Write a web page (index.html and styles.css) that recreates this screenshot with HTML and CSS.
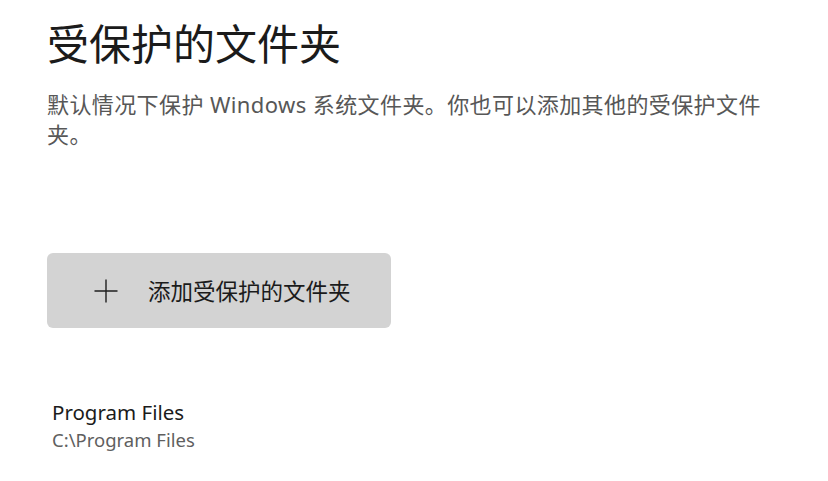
FILE: index.html
```html
<!DOCTYPE html>
<html lang="zh-CN">
<head>
<meta charset="utf-8">
<link rel="stylesheet" href="styles.css">
</head>
<body>
<main class="page">
  <h1 class="title">受保护的文件夹</h1>
  <p class="desc">默认情况下保护 Windows 系统文件夹。你也可以添加其他的受保护文件夹。</p>
  <button class="add-btn" type="button">
    <svg class="plus" width="26" height="26" viewBox="0 0 26 26" aria-hidden="true">
      <path d="M13 1.5V24.5M1.5 13H24.5" stroke="#1f1f1f" stroke-width="1.4" fill="none"/>
    </svg>
    <span class="add-label">添加受保护的文件夹</span>
  </button>
  <div class="folder">
    <div class="folder-name">Program Files</div>
    <div class="folder-path">C:\Program Files</div>
  </div>
</main>
</body>
</html>
```
FILE: styles.css
```css
html, body {
  margin: 0;
  padding: 0;
  background: #ffffff;
}
body {
  font-family: "Noto Sans", "Noto Sans CJK SC", sans-serif;
  color: #1b1b1b;
}
.page {
  padding: 16px 40px 0 47px;
  display: flex;
  flex-direction: column;
  align-items: flex-start;
}
.title {
  margin: 0;
  font-size: 42px;
  line-height: 56px;
  font-weight: 400;
  color: #1b1b1b;
}
.desc {
  margin: 17px 0 0;
  font-size: 22px;
  line-height: 30px;
  letter-spacing: 0.4px;
  color: #575757;
  max-width: 730px;
}
.add-btn {
  margin-top: 104px;
  width: 344px;
  height: 75px;
  border: none;
  border-radius: 6px;
  background: #d3d3d3;
  display: flex;
  align-items: center;
  padding: 0 0 0 46px;
  gap: 29px;
  font-family: inherit;
  cursor: pointer;
}
.add-label {
  font-size: 22.5px;
  color: #1b1b1b;
}
.folder {
  margin: 70px 0 0 5px;
  display: flex;
  flex-direction: column;
}
.folder-name {
  font-size: 20.5px;
  line-height: 28px;
  color: #1b1b1b;
}
.folder-path {
  font-size: 18.5px;
  line-height: 28px;
  color: #5f5f5f;
}
```
